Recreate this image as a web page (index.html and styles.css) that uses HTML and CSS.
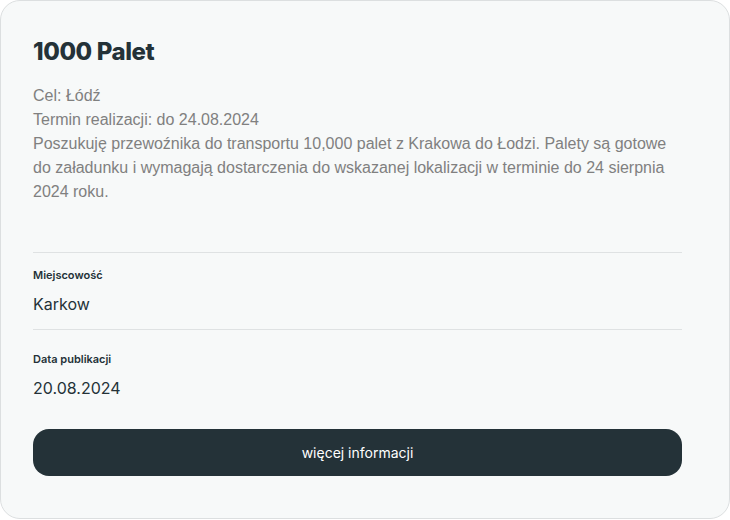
FILE: index.html
```html
<!DOCTYPE html>
<html lang="pl">
<head>
<meta charset="utf-8">
<link rel="stylesheet" href="styles.css">
</head>
<body>
<div class="card">
  <h1 class="title">1000 Palet</h1>
  <div class="desc">
    <p>Cel: Łódź</p>
    <p>Termin realizacji: do 24.08.2024</p>
    <p>Poszukuję przewoźnika do transportu 10,000 palet z Krakowa do Łodzi. Palety są gotowe do załadunku i wymagają dostarczenia do wskazanej lokalizacji w terminie do 24 sierpnia 2024 roku.</p>
  </div>
  <div class="field">
    <div class="label">Miejscowość</div>
    <div class="value">Karkow</div>
  </div>
  <div class="field field-last">
    <div class="label">Data publikacji</div>
    <div class="value">20.08.2024</div>
  </div>
  <button class="btn">więcej informacji</button>
</div>
</body>
</html>
```
FILE: styles.css
```css
* { box-sizing: border-box; }
html, body { margin: 0; padding: 0; background: #ffffff; }
.card {
  width: 730px;
  height: 519px;
  background: #f7f9f9;
  border: 1px solid #dcdfe0;
  border-radius: 20px;
  padding: 37px 47px 0 32px;
  font-family: "Inter", sans-serif;
  color: #243238;
}
.title {
  margin: 0;
  font-size: 24px;
  line-height: 28px;
  font-weight: 800;
  letter-spacing: -0.4px;
  color: #243238;
}
.desc {
  margin-top: 18px;
  font-family: "Liberation Sans", Arial, sans-serif;
  font-size: 16px;
  line-height: 24px;
  color: #808080;
  padding-bottom: 48px;
  border-bottom: 1px solid #dfe2e3;
}
.desc p { margin: 0; }
.field {
  padding: 15px 0 15px;
  border-bottom: 1px solid #dfe2e3;
}
.field-last {
  padding-top: 22px;
  border-bottom: none;
}
.label {
  font-size: 11px;
  line-height: 14px;
  font-weight: 600;
  color: #243238;
}
.value {
  margin-top: 12px;
  font-size: 16px;
  line-height: 20px;
  color: #243238;
}
.btn {
  display: block;
  width: 100%;
  height: 47px;
  margin-top: 16px;
  border: none;
  border-radius: 16px;
  background: #243238;
  color: #ffffff;
  font-family: "Inter", sans-serif;
  font-size: 14px;
}
```
